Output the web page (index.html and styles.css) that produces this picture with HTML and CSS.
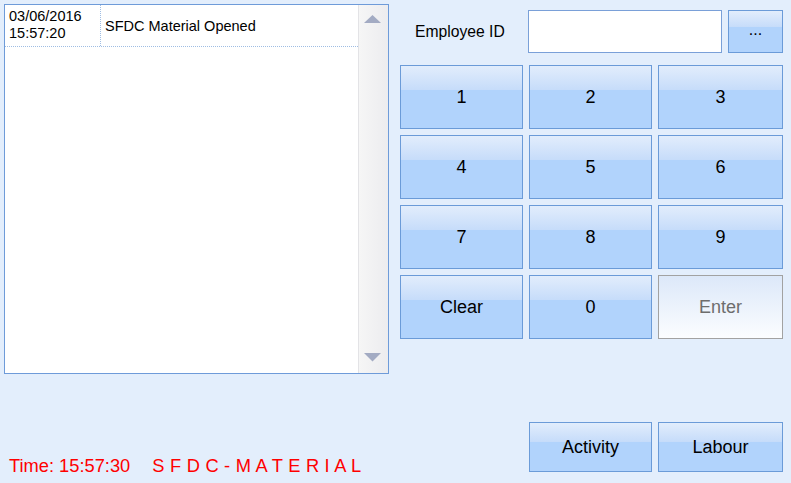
FILE: index.html
```html
<!DOCTYPE html>
<html lang="en">
<head>
    <meta charset="UTF-8">
    <title>SFDC Material</title>
    <link rel="stylesheet" href="styles.css">
</head>
<body>
    <div class="screen">
        <div class="left-panel">
            <div class="log-box">
                <div class="log-list">
                    <div class="log-row">
                        <div class="log-date">03/06/2016<br>15:57:20</div>
                        <div class="log-text">SFDC Material Opened</div>
                    </div>
                </div>
                <div class="scrollbar">
                    <svg class="arrow" width="30" height="20" viewBox="0 0 30 20">
                        <polygon points="6,18 23,18 14.5,10" fill="#a3abc3"/>
                    </svg>
                    <svg class="arrow" width="30" height="20" viewBox="0 0 30 20">
                        <polygon points="6,0 23,0 14.5,8.5" fill="#a3abc3"/>
                    </svg>
                </div>
            </div>
            <div class="status">
                <span>Time: 15:57:30</span>
                <span class="mode">S F D C - M A T E R I A L</span>
            </div>
        </div>

        <div class="right-panel">
            <div class="id-row">
                <label class="id-label" for="empId">Employee ID</label>
                <input class="id-input" id="empId" type="text">
                <button class="btn btn-more">...</button>
            </div>

            <div class="keypad">
                <button class="btn">1</button>
                <button class="btn">2</button>
                <button class="btn">3</button>
                <button class="btn">4</button>
                <button class="btn">5</button>
                <button class="btn">6</button>
                <button class="btn">7</button>
                <button class="btn">8</button>
                <button class="btn">9</button>
                <button class="btn">Clear</button>
                <button class="btn">0</button>
                <button class="btn btn-disabled" disabled>Enter</button>
            </div>

            <div class="actions">
                <button class="btn btn-action">Activity</button>
                <button class="btn btn-action wide">Labour</button>
            </div>
        </div>
    </div>
</body>
</html>
```

FILE: styles.css
```css
* {
    box-sizing: border-box;
}

body {
    margin: 0;
    padding: 0;
    width: 791px;
    height: 483px;
    overflow: hidden;
    background-color: #e3eefc;
    font-family: 'Liberation Sans', Arial, sans-serif;
    color: #000;
}

.screen {
    display: flex;
    height: 483px;
    padding: 4px;
    gap: 11px;
}

.left-panel {
    width: 385px;
    display: flex;
    flex-direction: column;
}

.log-box {
    height: 370px;
    display: flex;
    background-color: #fff;
    border: 1px solid #6e9bd9;
}

.log-list {
    flex: 1;
}

.log-row {
    display: flex;
    height: 42px;
    border-bottom: 1px dotted #9fbde3;
    font-size: 14.5px;
}

.log-date {
    width: 96px;
    padding: 3px 0 0 4px;
    line-height: 17px;
    border-right: 1px dotted #9fbde3;
}

.log-text {
    display: flex;
    align-items: center;
    padding-left: 4px;
}

.scrollbar {
    width: 30px;
    display: flex;
    flex-direction: column;
    justify-content: space-between;
    background: linear-gradient(to right, #f6f6f6, #ececef);
    border-left: 1px solid #e3e3e6;
}

.arrow {
    display: block;
    margin-left: -1px;
}

.status {
    margin-top: auto;
    margin-bottom: 3px;
    padding-left: 5px;
    display: flex;
    gap: 22px;
    font-size: 18.3px;
    line-height: 20px;
    color: #f00;
}

.mode {
    letter-spacing: 0.22px;
}

.right-panel {
    width: 383px;
    margin: 6px 0 7px 0;
    display: flex;
    flex-direction: column;
}

.id-row {
    display: flex;
    align-items: center;
    gap: 6px;
    height: 43px;
}

.id-label {
    width: 122px;
    padding-left: 15px;
    font-size: 15.7px;
}

.id-input {
    width: 194px;
    height: 43px;
    border: 1px solid #7aa0d8;
    background-color: #fff;
    outline: none;
}

.btn {
    font-family: 'Liberation Sans', Arial, sans-serif;
    font-size: 18px;
    color: #000;
    border: 1px solid #6b9bd8;
    background: linear-gradient(to bottom, #e2edfc 0%, #c6dcfa 39%, #b1d3fc 39%, #b1d3fc 100%);
    padding: 0;
    cursor: pointer;
}

.btn-more {
    width: 55px;
    height: 43px;
    font-size: 16px;
    padding-bottom: 3px;
}

.keypad {
    margin-top: 12px;
    display: grid;
    grid-template-columns: 123px 123px 125px;
    grid-auto-rows: 64px;
    gap: 6px;
}

.btn-disabled {
    color: #6d6d6d;
    border-color: #a2a2a2;
    background: linear-gradient(to bottom, #dce8f9, #fbfdff);
    cursor: default;
}

.actions {
    margin-top: auto;
    display: flex;
    justify-content: flex-end;
    gap: 6px;
}

.btn-action {
    width: 123px;
    height: 50px;
}

.btn-action.wide {
    width: 125px;
}
```
